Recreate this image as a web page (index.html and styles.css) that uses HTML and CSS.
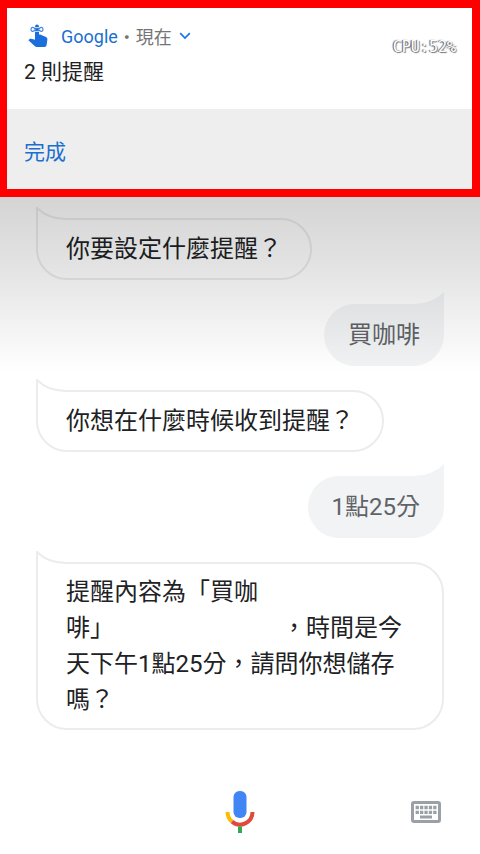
FILE: index.html
```html
<!DOCTYPE html>
<html lang="zh-Hant">
<head>
<meta charset="utf-8">
<meta name="viewport" content="width=device-width, initial-scale=1">
<title>Google 提醒</title>
<link rel="stylesheet" href="styles.css">
</head>
<body>
<section class="notification">
  <div class="notification-body">
    <div>
      <div class="source">
        <svg class="touch-icon" viewBox="0 0 22 24" aria-hidden="true">
          <path fill="#1a6fdd" d="M7 3Q7 .6 9 .6T11 3v7.600h1.200L18 13q1.600.8 1.400 2.400L18.600 21q-.3 2-2.100 2H8.800q-1.100 0-1.900-.8L.4 16.200l.9-1q.8-.7 1.800-.4L7 15.800z"/>
          <path fill="#fff" stroke="#3f84e0" stroke-width="1.200" d="M7.600 5.400C5.400 2.600 3 3 3 5.400s2.400 2.800 4.600 0M10.400 5.400c2.200-2.800 4.600-2.400 4.600 0s-2.400 2.800-4.600 0"/>
          <path stroke="#fff" stroke-width=".8" d="M7 7.400h4M7 3.600h4"/>
        </svg>
        <span class="app">Google</span>
        <span class="time">・現在</span>
        <button class="expand" aria-label="展開"><svg viewBox="0 0 12 8" aria-hidden="true"><path d="M1.200 1.200 6 6l4.800-4.800" fill="none" stroke="#1a73e8" stroke-width="1.700"/></svg></button>
      </div>
      <h1>2 則提醒</h1>
    </div>
    <span class="cpu">CPU:52%</span>
  </div>
  <div class="actions"><button>完成</button></div>
</section>
<main class="chat">
  <p class="bubble reply"><svg class="tail" viewBox="0 0 30 14" aria-hidden="true"><path class="mask" d="M1 1v13h29v-4z"/><path class="line" d="M1 14V1Q12 12 30 12"/></svg>你要設定什麼提醒？</p>
  <p class="bubble mine"><svg class="tail" viewBox="0 0 30 14" aria-hidden="true"><path d="M30 0v14H0v-2Q18 12 30 0z"/></svg>買咖啡</p>
  <p class="bubble reply"><svg class="tail" viewBox="0 0 30 14" aria-hidden="true"><path class="mask" d="M1 1v13h29v-4z"/><path class="line" d="M1 14V1Q12 12 30 12"/></svg>你想在什麼時候收到提醒？</p>
  <p class="bubble mine"><svg class="tail" viewBox="0 0 30 14" aria-hidden="true"><path d="M30 0v14H0v-2Q18 12 30 0z"/></svg>1點25分</p>
  <p class="bubble reply wide"><svg class="tail" viewBox="0 0 30 14" aria-hidden="true"><path class="mask" d="M1 1v13h29v-4z"/><path class="line" d="M1 14V1Q12 12 30 12"/></svg><span>提醒內容為「買咖<br>啡」　　　　　　　&nbsp;&nbsp;，時間是今<br>天下午1點25分，請問你想儲存<br>嗎？</span></p>
</main>
<footer class="bar">
  <button class="mic" aria-label="語音輸入"><svg viewBox="0 0 30 44" aria-hidden="true">
    <rect x="8.500" y="1" width="13" height="27" rx="6" fill="#4285f4"/>
    <path d="M2.500 22A12.500 12.500 0 0 0 7 31.600" fill="none" stroke="#fbbc05" stroke-width="4"/>
    <path d="M7 31.600A12.500 12.500 0 0 0 27.500 22" fill="none" stroke="#e04a3c" stroke-width="4"/>
    <path d="M13 36.500h4V43h-4z" fill="#34a853"/>
  </svg></button>
  <button class="keyboard" aria-label="鍵盤"><svg viewBox="0 0 30 22" aria-hidden="true">
    <rect x="1.500" y="1.500" width="27" height="19" rx="1.500" fill="none" stroke="#9aa0a6" stroke-width="3"/>
    <path d="M4.600 6.500h21M4.600 11.300h21" stroke="#9aa0a6" stroke-width="3.300" stroke-dasharray="3.300 1.100"/>
    <path d="M9 16h12" stroke="#9aa0a6" stroke-width="3"/>
  </svg></button>
</footer>
</body>
</html>
```

FILE: styles.css
```css
* { box-sizing: border-box; }

body {
  margin: 0;
  min-height: 100vh;
  display: flex;
  flex-direction: column;
  background: #fff;
  color: #202124;
  font-family: Roboto, "Noto Sans CJK TC", sans-serif;
}

button {
  padding: 0;
  border: 0;
  background: none;
  font: inherit;
  cursor: pointer;
}

svg { display: block; }

.notification {
  border: 8px solid #f00;
  border-left-width: 7px;
}

.notification-body {
  display: flex;
  justify-content: space-between;
  padding: 16px 16px 20px 17px;
}

.source {
  display: flex;
  align-items: center;
  height: 24px;
  font-size: 18px;
}

.touch-icon {
  width: 22px;
  height: 24px;
  margin: 0 11px 0 4px;
}

.app { color: #1a6fd0; }
.time { color: #757575; }

.expand { margin-left: 7px; }

.expand svg {
  width: 12px;
  height: 8px;
}

h1 {
  margin: 8px 0 0;
  font-size: 21px;
  font-weight: 400;
  line-height: 33px;
}

.cpu {
  margin-top: 13px;
  color: #fff;
  font: 15px/20px "DejaVu Sans Mono", monospace;
  text-shadow: -1px 0 1px #555, 1px 1px 1px #777;
}

.actions {
  padding: 27px 17px 21px;
  background: #eee;
}

.actions button {
  display: block;
  color: #1a6fd0;
  font-size: 21px;
  line-height: 32px;
}

.chat {
  position: relative;
  flex: 1;
  display: flex;
  flex-direction: column;
  align-items: flex-start;
  gap: 24px;
  padding: 21px 36px 24px;
}

.chat::after {
  content: "";
  position: absolute;
  inset: 0 0 auto;
  height: 176px;
  background: linear-gradient(rgba(0, 0, 0, .17), rgba(0, 0, 0, .11) 40%, rgba(0, 0, 0, 0));
  pointer-events: none;
}

.bubble {
  position: relative;
  display: flex;
  align-items: center;
  min-height: 62px;
  margin: 0;
  border-radius: 31px;
  font-size: 24px;
  line-height: 36px;
}

.reply {
  padding: 10px 28px;
  border: 2px solid #ebecee;
  border-top-left-radius: 0;
}

.wide { width: 100%; }

.mine {
  align-self: flex-end;
  padding: 12px 24px;
  border-top-right-radius: 0;
  background: #f1f3f4;
  color: #5f6368;
}

.tail {
  position: absolute;
  width: 30px;
  height: 14px;
}

.reply .tail {
  top: -13px;
  left: -2px;
}

.mine .tail {
  top: -12px;
  right: 0;
  fill: #f1f3f4;
}

.mask { fill: #fff; }

.line {
  fill: none;
  stroke: #ebecee;
  stroke-width: 2;
}

.bar {
  display: grid;
  grid-template-columns: 1fr auto 1fr;
  align-items: center;
  padding: 0 39px 20px;
}

.mic { grid-column: 2; }

.mic svg {
  width: 30px;
  height: 44px;
}

.keyboard { justify-self: end; }

.keyboard svg {
  width: 30px;
  height: 22px;
}
```
